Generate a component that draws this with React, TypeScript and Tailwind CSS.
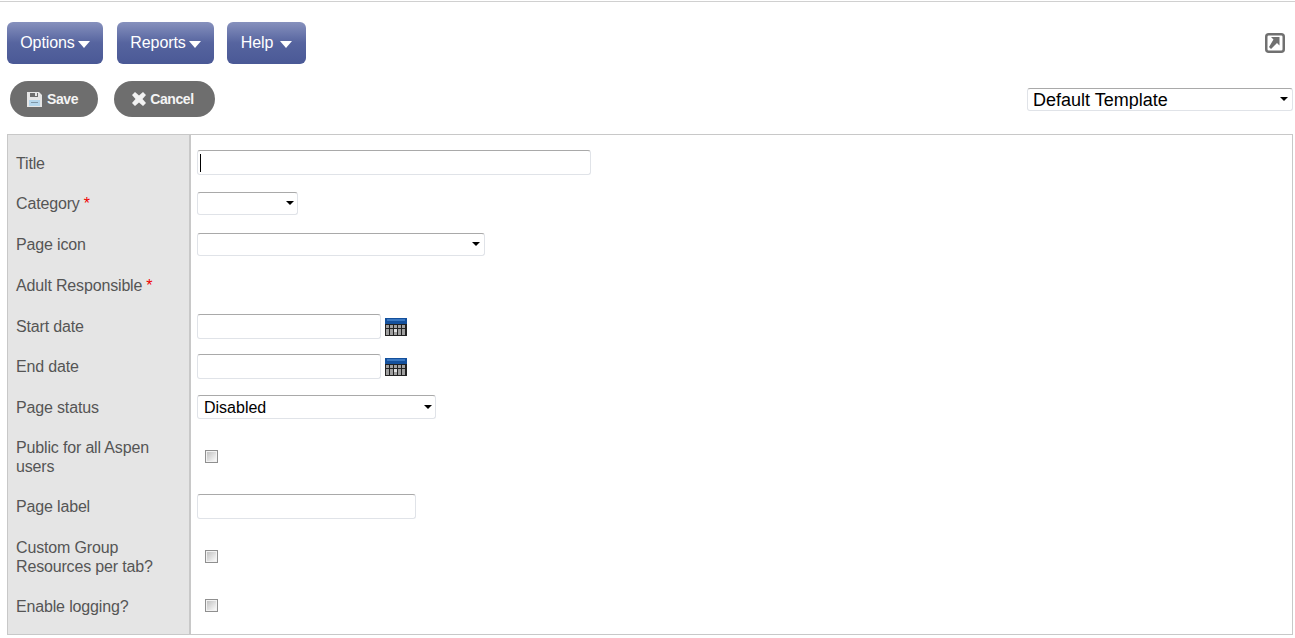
import React from "react";

const Caret = ({ className }: { className: string }) => (
  <span className={`absolute top-1/2 -translate-y-1/2 w-0 h-0 border-x-[4px] border-x-transparent border-t-[4px] border-t-black ${className}`} />
);

const fieldBorder = "border border-[#e0e3e8] border-t-[#a9a9a9] rounded-[3px] bg-white";

const Select = ({ value, box, text = "text-[16px] pl-[6px]", caret = "right-[5px]" }: { value?: string; box: string; text?: string; caret?: string }) => (
  <div className={`relative ${box}`}>
    <select
      defaultValue={value}
      className={`appearance-none w-full h-full ${text} leading-none text-black outline-none ${fieldBorder}`}
    >
      <option>{value}</option>
    </select>
    <Caret className={caret} />
  </div>
);

const TextInput = ({ box }: { box: string }) => (
  <input type="text" className={`block outline-none ${fieldBorder} ${box}`} />
);

const CalendarIcon = () => (
  <svg width="22" height="18" viewBox="0 0 22 18" className="ml-[4px] mt-[1px]">
    <rect width="22" height="18" fill="#222" />
    <rect x="0" y="0" width="22" height="6" fill="#14509c" />
    <rect x="2" y="1" width="18" height="2" fill="#3a78c2" />
    {[7, 11, 14].flatMap((y) =>
      [1, 5, 9, 13, 17].map((x) => (
        <rect key={`${x}-${y}`} x={x} y={y} width="3" height="3" fill={y === 11 && x === 9 ? "#e2e2e2" : "#a0a0a0"} />
      ))
    )}
  </svg>
);

const Check = ({ className = "" }: { className?: string }) => (
  <span className={`block ml-[8px] w-[13px] h-[13px] border border-[#8f8f8f] p-[1px] bg-[#f2f2f2] ${className}`}>
    <span className="block w-full h-full bg-gradient-to-br from-[#c2c2c2] to-[#fafafa]" />
  </span>
);

const Req = () => <span className="text-[#f00000] ml-[4px]">*</span>;

const rows: { label: React.ReactNode; h: string; field?: React.ReactNode }[] = [
  {
    label: "Title",
    h: "h-[40px]",
    field: (
      <div className="relative -mt-[2px]">
        <TextInput box="w-[394px] h-[25px]" />
        <span className="absolute left-[3px] top-[4px] w-[1px] h-[18px] bg-black" />
      </div>
    ),
  },
  {
    label: (
      <>
        Category
        <Req />
      </>
    ),
    h: "h-[41px]",
    field: <Select box="w-[101px] h-[23px] -mt-[2px]" caret="right-[4px]" />,
  },
  { label: "Page icon", h: "h-[41px]", field: <Select box="w-[288px] h-[23px] -mt-[2px]" /> },
  {
    label: (
      <>
        Adult Responsible
        <Req />
      </>
    ),
    h: "h-[41px]",
  },
  {
    label: "Start date",
    h: "h-[40px]",
    field: (
      <div className="flex items-center">
        <TextInput box="w-[184px] h-[25px]" />
        <CalendarIcon />
      </div>
    ),
  },
  {
    label: "End date",
    h: "h-[41px]",
    field: (
      <div className="flex items-center">
        <TextInput box="w-[184px] h-[25px]" />
        <CalendarIcon />
      </div>
    ),
  },
  {
    label: "Page status",
    h: "h-[40px]",
    field: <Select value="Disabled" text="text-[16px] pl-[6px] pt-[1px]" box="w-[239px] h-[24px]" caret="right-[4px]" />,
  },
  { label: "Public for all Aspen users", h: "h-[59px]", field: <Check /> },
  { label: "Page label", h: "h-[41px]", field: <TextInput box="w-[219px] h-[25px]" /> },
  { label: "Custom Group Resources per tab?", h: "h-[59px]", field: <Check /> },
  { label: "Enable logging?", h: "h-[40px]", field: <Check className="-mt-[2px]" /> },
];

const NavButton = ({ label, w, gap }: { label: string; w: string; gap: string }) => (
  <button className={`${w} h-[42px] rounded-[6px] flex items-center justify-center text-white text-[16px] tracking-[-0.1px] bg-gradient-to-b from-[#8791bd] via-[#56649f] via-50% to-[#4a5996]`}>
    {label}
    <span className={`${gap} w-0 h-0 border-x-[6px] border-x-transparent border-t-[7px] border-t-white mt-[2px]`} />
  </button>
);

const PillButton = ({ label, w, icon }: { label: string; w: string; icon: React.ReactNode }) => (
  <button className={`${w} h-[36px] rounded-full bg-[#6e6e6e] flex items-center justify-center gap-[4px] pr-[3px] text-[#f4f4f4] text-[14px] tracking-[-0.4px] font-bold`}>
    {icon}
    {label}
  </button>
);

const SaveIcon = () => (
  <svg width="16" height="16" viewBox="0 0 16 16">
    <path d="M0 1h12l3 3v12H0z" fill="#e6e6e6" />
    <rect x="3" y="2" width="8" height="4" fill="#6e6e6e" />
    <rect x="8" y="2" width="2" height="3" fill="#e6e6e6" />
    <rect x="2" y="9" width="11" height="6" fill="#b5d6ec" />
    <rect x="4" y="11" width="7" height="1" fill="#7f97a8" />
  </svg>
);

const CancelIcon = () => (
  <svg width="14" height="14" viewBox="0 0 14 14">
    <path d="M0 3l3-3 4 3.5L11 0l3 3-3.5 4L14 11l-3 3-4-3.5L3 14l-3-3 3.5-4z" fill="#f2f2f2" />
  </svg>
);

export default function App() {
  return (
    <div className="w-[1295px] h-[638px] overflow-hidden bg-white font-['Liberation_Sans',Arial,sans-serif] text-[16px] text-[#555]">
      <div className="h-[1px] mt-[1px] bg-[#d0d0d0]" />

      <div className="flex items-center pl-[7px] pr-[10px] mt-[20px]">
        <NavButton label="Options" w="w-[96px]" gap="ml-[3px]" />
        <div className="w-[14px]" />
        <NavButton label="Reports" w="w-[97px]" gap="ml-[3px]" />
        <div className="w-[13px]" />
        <NavButton label="Help" w="w-[79px]" gap="ml-[7px]" />
        <svg width="20" height="20" viewBox="0 0 20 20" className="ml-auto">
          <rect x="1.25" y="1.25" width="17.5" height="17.5" rx="2.5" fill="#fff" stroke="#707070" strokeWidth="2.5" />
          <path d="M4 14l2 2 6-6 2.5 2.5V4H6l2.5 2.5z" fill="#707070" />
        </svg>
      </div>

      <div className="flex items-center justify-between pl-[10px] pr-[2px] mt-[17px]">
        <div className="flex gap-[16px]">
          <PillButton label="Save" w="w-[88px]" icon={<SaveIcon />} />
          <PillButton label="Cancel" w="w-[101px]" icon={<CancelIcon />} />
        </div>
        <Select value="Default Template" text="text-[18px] pl-[5px] pt-[1px]" box="w-[266px] h-[23px]" />
      </div>

      <div className="flex ml-[7px] mr-[2px] mt-[17px] h-[501px] border border-[#c8c8c8]">
        <div className="w-[181px] bg-[#e5e5e5] border-r-[2px] border-[#c8c8c8] box-content shrink-0 pt-[8px]">
          {rows.map((r, i) => (
            <div key={i} className={`${r.h} flex items-center pl-[8px] pr-[20px] leading-[19px] tracking-[-0.16px]`}>
              <div>{r.label}</div>
            </div>
          ))}
        </div>
        <div className="flex-1 pt-[8px] pl-[6px]">
          {rows.map((r, i) => (
            <div key={i} className={`${r.h} flex items-center`}>
              {r.field}
            </div>
          ))}
        </div>
      </div>
    </div>
  );
}
